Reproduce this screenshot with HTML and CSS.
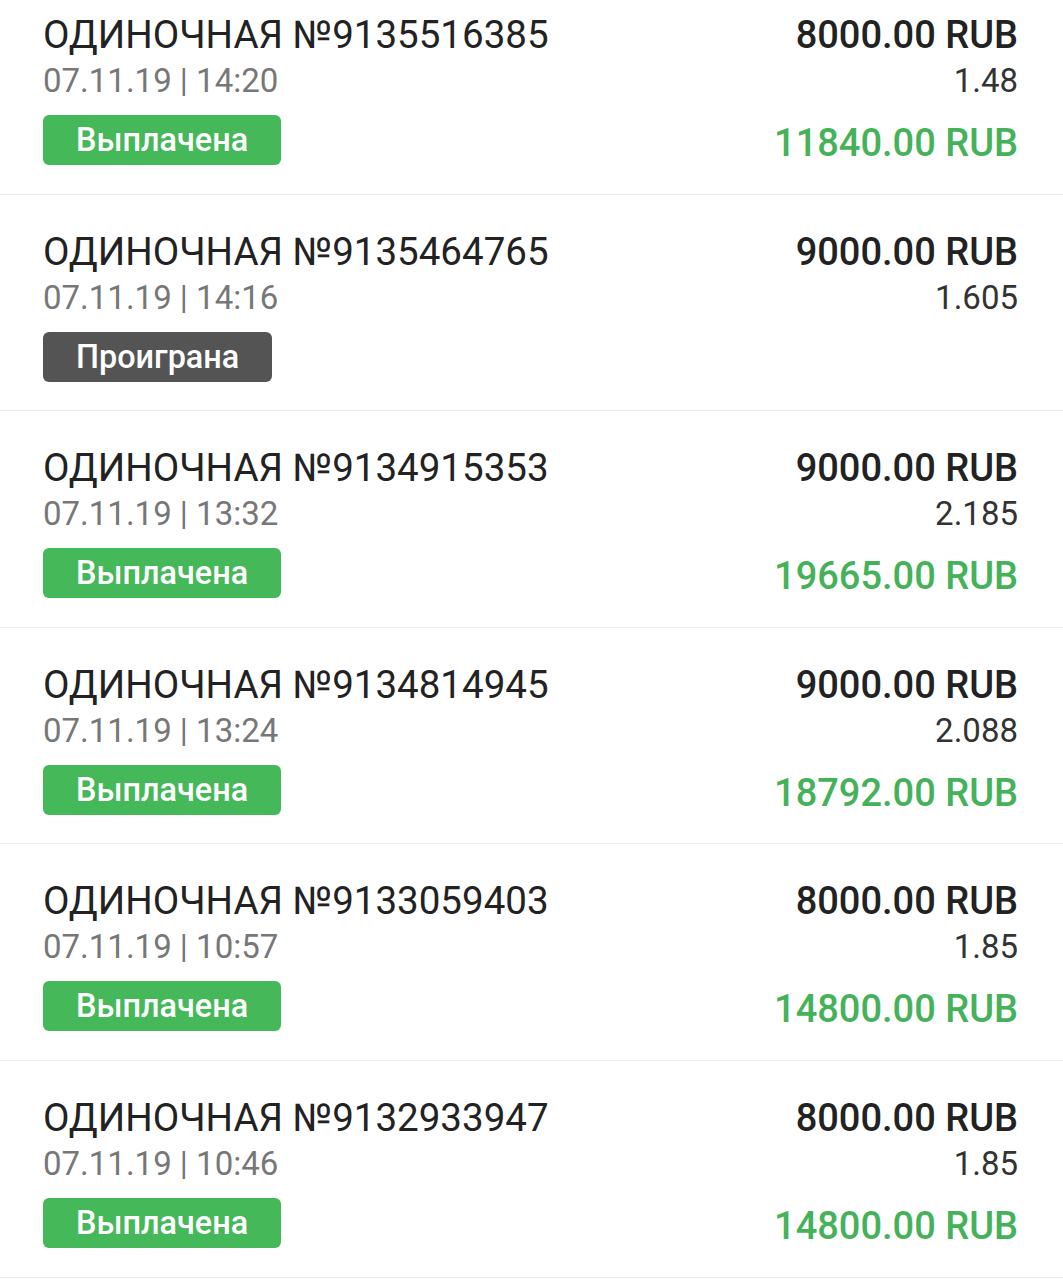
FILE: index.html
```html
<!DOCTYPE html>
<html lang="ru">
<head>
<meta charset="utf-8">
<link rel="stylesheet" href="styles.css">
</head>
<body>
<div class="list">
  <div class="row">
    <div class="left">
      <div class="title">ОДИНОЧНАЯ №9135516385</div>
      <div class="date">07.11.19 | 14:20</div>
      <div class="badge win">Выплачена</div>
    </div>
    <div class="right">
      <div class="stake">8000.00 RUB</div>
      <div class="odds">1.48</div>
      <div class="payout">11840.00 RUB</div>
    </div>
  </div>
  <div class="row">
    <div class="left">
      <div class="title">ОДИНОЧНАЯ №9135464765</div>
      <div class="date">07.11.19 | 14:16</div>
      <div class="badge lost">Проиграна</div>
    </div>
    <div class="right">
      <div class="stake">9000.00 RUB</div>
      <div class="odds">1.605</div>
    </div>
  </div>
  <div class="row">
    <div class="left">
      <div class="title">ОДИНОЧНАЯ №9134915353</div>
      <div class="date">07.11.19 | 13:32</div>
      <div class="badge win">Выплачена</div>
    </div>
    <div class="right">
      <div class="stake">9000.00 RUB</div>
      <div class="odds">2.185</div>
      <div class="payout">19665.00 RUB</div>
    </div>
  </div>
  <div class="row">
    <div class="left">
      <div class="title">ОДИНОЧНАЯ №9134814945</div>
      <div class="date">07.11.19 | 13:24</div>
      <div class="badge win">Выплачена</div>
    </div>
    <div class="right">
      <div class="stake">9000.00 RUB</div>
      <div class="odds">2.088</div>
      <div class="payout">18792.00 RUB</div>
    </div>
  </div>
  <div class="row">
    <div class="left">
      <div class="title">ОДИНОЧНАЯ №9133059403</div>
      <div class="date">07.11.19 | 10:57</div>
      <div class="badge win">Выплачена</div>
    </div>
    <div class="right">
      <div class="stake">8000.00 RUB</div>
      <div class="odds">1.85</div>
      <div class="payout">14800.00 RUB</div>
    </div>
  </div>
  <div class="row">
    <div class="left">
      <div class="title">ОДИНОЧНАЯ №9132933947</div>
      <div class="date">07.11.19 | 10:46</div>
      <div class="badge win">Выплачена</div>
    </div>
    <div class="right">
      <div class="stake">8000.00 RUB</div>
      <div class="odds">1.85</div>
      <div class="payout">14800.00 RUB</div>
    </div>
  </div>
</div>
</body>
</html>
```
FILE: styles.css
```css
html, body {
  margin: 0;
  padding: 0;
  background: #ffffff;
}
body {
  font-family: Roboto, "Noto Sans", sans-serif;
  overflow: hidden;
}
.list {
  margin-top: -22px;
}
.row {
  box-sizing: border-box;
  height: 216.6px;
  display: flex;
  justify-content: space-between;
  padding: 36px 45px 0 43px;
  border-bottom: 1px solid #ececec;
}
.left, .right {
  display: flex;
  flex-direction: column;
}
.right {
  align-items: flex-end;
}
.title {
  font-size: 38.5px;
  line-height: 42px;
  color: #222222;
}
.date {
  font-size: 33px;
  line-height: 50px;
  color: #777777;
}
.badge {
  margin-top: 9px;
  height: 50px;
  line-height: 50px;
  box-sizing: border-box;
  padding: 0 33px 0 33px;
  border-radius: 6px;
  color: #ffffff;
  font-size: 32.4px;
  font-weight: 500;
  align-self: flex-start;
}
.badge.win {
  background: #45b85a;
}
.badge.lost {
  background: #545454;
}
.stake {
  font-size: 38px;
  line-height: 42px;
  font-weight: 500;
  color: #222222;
}
.odds {
  font-size: 33px;
  line-height: 50px;
  color: #333333;
}
.payout {
  margin-top: 12px;
  font-size: 38px;
  line-height: 50px;
  font-weight: 500;
  color: #45b25a;
}
```
